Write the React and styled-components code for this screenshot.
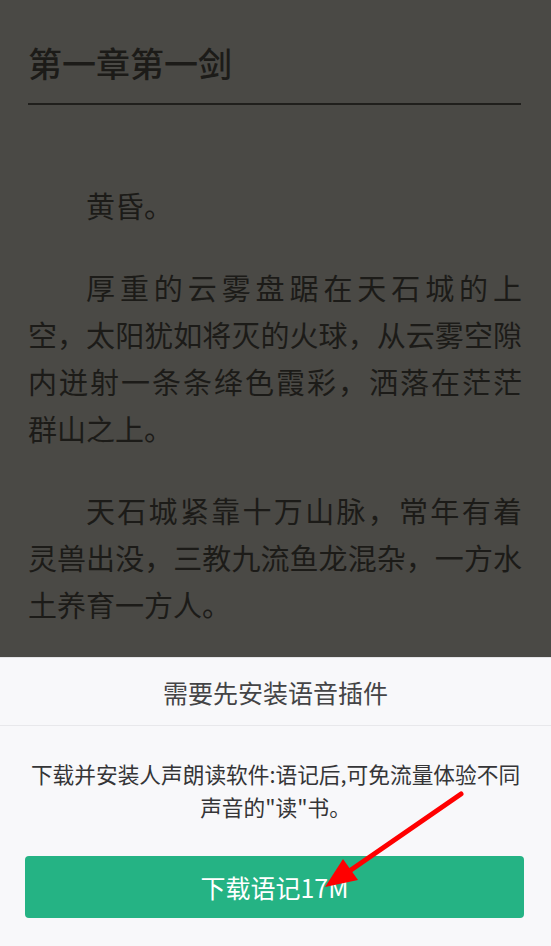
import React from 'react'
import styled, { createGlobalStyle } from 'styled-components'

const GlobalStyle = createGlobalStyle`
  html, body {
    margin: 0;
    padding: 0;
  }
  body {
    font-family: 'Noto Sans CJK SC', 'Noto Sans', sans-serif;
  }
`

const Page = styled.div`
  position: relative;
  display: flex;
  flex-direction: column;
  height: 100vh;
  min-height: 946px;
  background-color: #4a4945;
  overflow: hidden;
`

const Reader = styled.main`
  flex: 1;
  padding: 0 29px 0 28px;
  color: #1c1b18;
  overflow: hidden;
`

const ChapterTitle = styled.h1`
  margin: 0 1px 77px 0;
  padding: 43px 0 20px 0;
  font-size: 34px;
  line-height: 40px;
  font-weight: 500;
  border-bottom: 2px solid #201f1c;
`

const Paragraph = styled.p`
  margin: 0 0 35px 0;
  font-size: 29px;
  line-height: 47px;
`

const Line = styled.span`
  display: block;
  text-align: justify;
  text-align-last: ${(p) => (p.$last ? 'left' : 'justify')};
  text-indent: ${(p) => (p.$first ? '2em' : '0')};
`

const Sheet = styled.section`
  flex: none;
  background-color: #f8f8fa;
  border-top: 1px solid #e4e4e7;
`

const SheetHeader = styled.div`
  display: flex;
  align-items: center;
  justify-content: center;
  height: 67px;
  font-size: 25px;
  color: #444446;
  border-bottom: 1px solid #e8e8eb;
`

const SheetText = styled.p`
  margin: 0;
  padding: 31px 12px 33px;
  font-size: 21.7px;
  line-height: 33px;
  color: #353537;
  text-align: center;
  white-space: nowrap;
`

const DownloadButton = styled.button`
  display: flex;
  align-items: center;
  justify-content: center;
  width: calc(100% - 52px);
  height: 62px;
  margin: 0 27px 28px 25px;
  border: none;
  border-radius: 4px;
  background-color: #25b384;
  color: #ffffff;
  font-family: inherit;
  font-size: 25px;
  cursor: pointer;
`

const Annotation = styled.svg`
  position: absolute;
  top: 0;
  left: 0;
  pointer-events: none;
`

const paragraphs = [
  ['黄昏。'],
  [
    '厚重的云雾盘踞在天石城的上',
    '空，太阳犹如将灭的火球，从云雾空隙',
    '内迸射一条条绛色霞彩，洒落在茫茫',
    '群山之上。',
  ],
  [
    '天石城紧靠十万山脉，常年有着',
    '灵兽出没，三教九流鱼龙混杂，一方水',
    '土养育一方人。',
  ],
]

const App = () => (
  <Page>
    <GlobalStyle />
    <Reader>
      <ChapterTitle>第一章第一剑</ChapterTitle>
      {paragraphs.map((lines, i) => (
        <Paragraph key={i}>
          {lines.map((text, j) => (
            <Line key={j} $first={j === 0} $last={j === lines.length - 1}>
              {text}
            </Line>
          ))}
        </Paragraph>
      ))}
    </Reader>
    <Sheet>
      <SheetHeader>需要先安装语音插件</SheetHeader>
      <SheetText>
        下载并安装人声朗读软件:语记后,可免流量体验不同
        <br />
        声音的"读"书。
      </SheetText>
      <DownloadButton>下载语记17M</DownloadButton>
    </Sheet>
    <Annotation width="551" height="946" viewBox="0 0 551 946">
      <line
        x1="461"
        y1="794"
        x2="348"
        y2="872"
        stroke="#ff0000"
        strokeWidth="5"
        strokeLinecap="round"
      />
      <polygon points="325,887 343,859 358,880" fill="#ff0000" />
    </Annotation>
  </Page>
)

export default App
